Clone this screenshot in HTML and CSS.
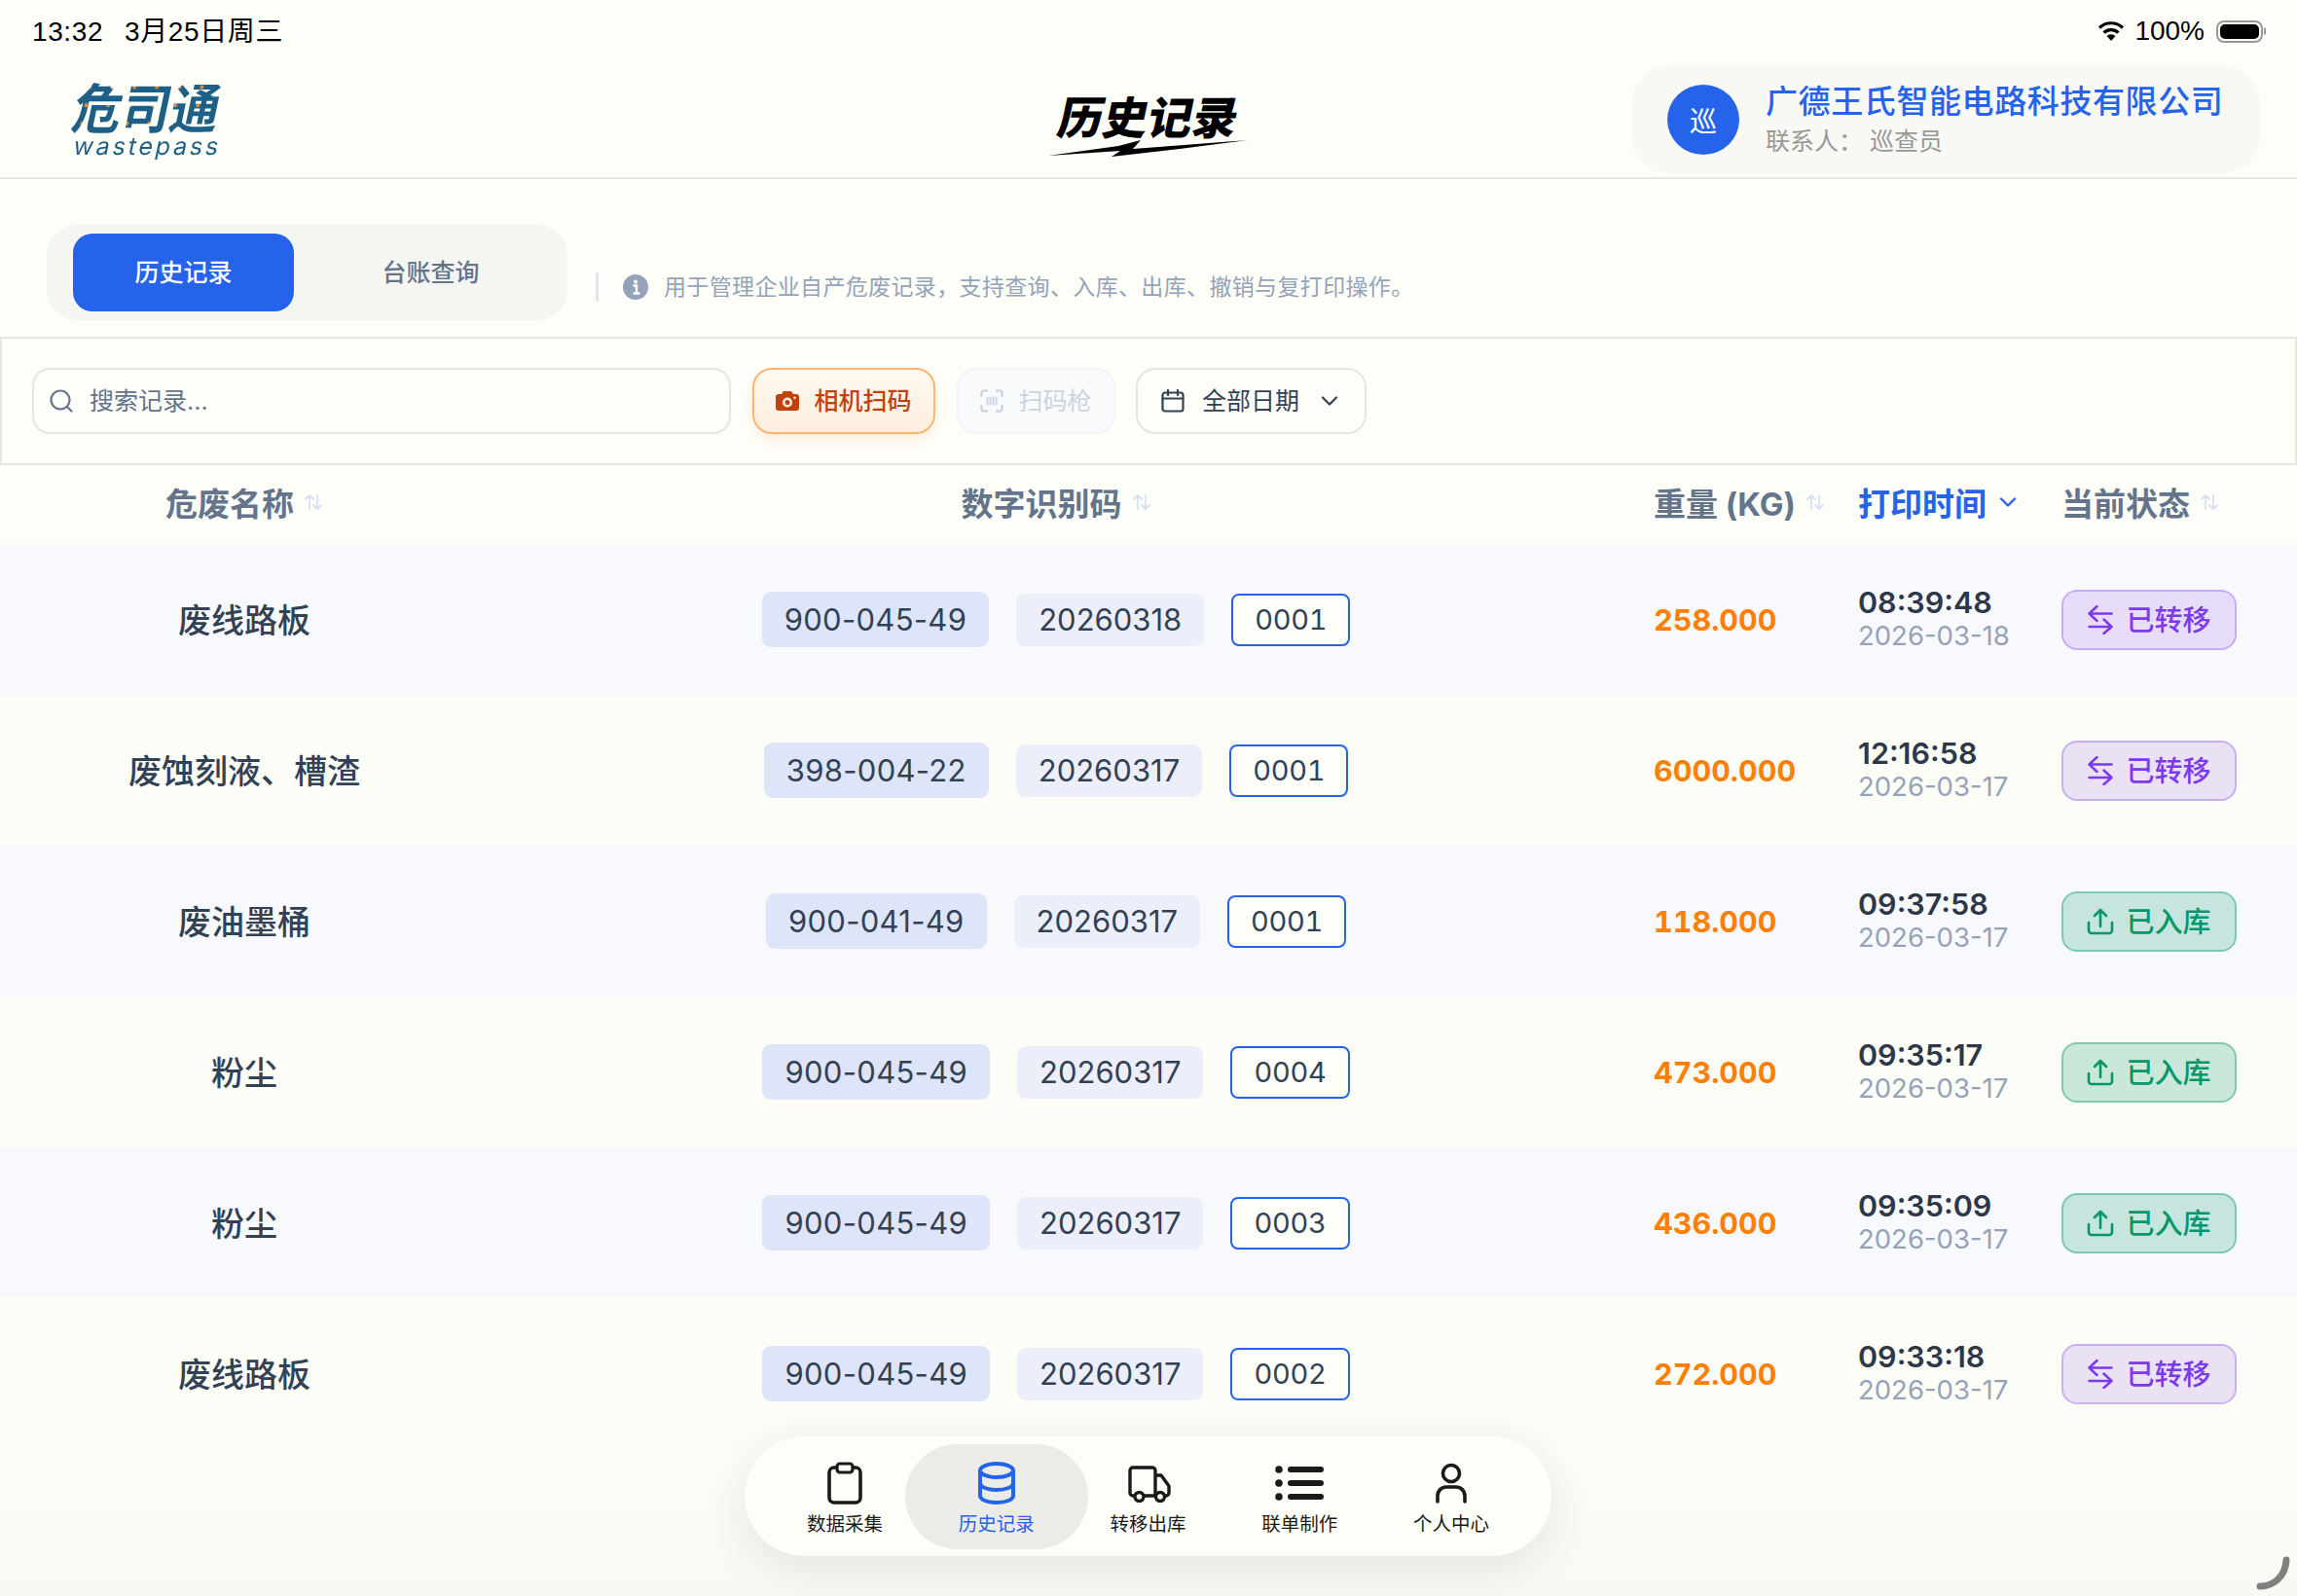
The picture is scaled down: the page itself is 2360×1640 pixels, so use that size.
FILE: index.html
```html
<!DOCTYPE html>
<html lang="zh-CN">
<head>
    <meta charset="UTF-8">
    <meta name="viewport" content="width=device-width, initial-scale=1.0">
    <title>历史记录</title>
    <link rel="stylesheet" href="styles.css">
</head>
<body>
    <svg class="icon-defs" width="0" height="0">
        <defs>
            <symbol id="i-sort" viewBox="0 0 20 20">
                <path d="M6 17V3M2 7l4-4 4 4M14 3v14M10 13l4 4 4-4" fill="none" stroke="currentColor" stroke-width="1.8" stroke-linecap="round" stroke-linejoin="round"/>
            </symbol>
            <symbol id="i-transfer" viewBox="0 0 26 30">
                <path d="M24.500 8.500H1.500M9.500 1 1.500 8.500 9.500 16M1.500 22h23M16.500 14.500l8 7.500-8 7" fill="none" stroke="currentColor" stroke-width="2.500" stroke-linecap="round" stroke-linejoin="round"/>
            </symbol>
            <symbol id="i-upload" viewBox="0 0 28 28">
                <path d="M14 19V2M8 8l6-6 6 6M2 15v8a3 3 0 0 0 3 3h18a3 3 0 0 0 3-3v-8" fill="none" stroke="currentColor" stroke-width="2.600" stroke-linecap="round" stroke-linejoin="round"/>
            </symbol>
        </defs>
    </svg>

    <div class="status-bar">
        <div class="status-left">
            <span>13:32</span>
            <span>3月25日周三</span>
        </div>
        <div class="status-right">
            <svg class="wifi-icon" viewBox="0 0 30 22">
                <path d="M15 21 10.500 16a6.500 6.500 0 0 1 9 0z" fill="#000"/>
                <path d="M7.500 12.500a11 11 0 0 1 15 0M3 7.500a17.500 17.500 0 0 1 24 0" fill="none" stroke="#000" stroke-width="3.200"/>
            </svg>
            <span>100%</span>
            <div class="battery"><div class="battery-level"></div></div>
            <div class="battery-nub"></div>
        </div>
    </div>

    <header class="app-header">
        <div class="logo">
            <div class="logo-cn">危司通</div>
            <div class="logo-en">wastepass</div>
        </div>
        <div class="page-title">
            <div class="page-title-text">历史记录</div>
            <svg class="page-title-bolt" viewBox="0 0 206 18">
                <path d="M0 16 72 6 95 0 87 9 205 0 135 9 65 17 74 11z" fill="#000"/>
            </svg>
        </div>
        <div class="company-card">
            <div class="company-avatar">巡</div>
            <div class="company-info">
                <div class="company-name">广德王氏智能电路科技有限公司</div>
                <div class="company-contact">联系人： 巡查员</div>
            </div>
        </div>
    </header>

    <section class="tab-area">
        <div class="tabs">
            <div class="tab active">历史记录</div>
            <div class="tab">台账查询</div>
        </div>
        <div class="hint">
            <div class="hint-line"></div>
            <svg class="hint-icon" viewBox="0 0 26 26">
                <circle cx="13" cy="13" r="13" fill="#94a3b8"/>
                <circle cx="13" cy="7.500" r="2" fill="#fff"/>
                <path d="M10.500 11.500H14v8M10.500 19.500h7" fill="none" stroke="#fff" stroke-width="2.400"/>
            </svg>
            <span class="hint-text">用于管理企业自产危废记录，支持查询、入库、出库、撤销与复打印操作。</span>
        </div>
    </section>

    <section class="filter-bar">
        <div class="search-box">
            <svg class="btn-icon" viewBox="0 0 24 24">
                <circle cx="11" cy="11" r="9.500" fill="none" stroke="#64748b" stroke-width="2.200"/>
                <path d="M18 18l4.500 4.500" stroke="#64748b" stroke-width="2.200" stroke-linecap="round"/>
            </svg>
            <span>搜索记录...</span>
        </div>
        <div class="filter-btn btn-camera">
            <svg class="btn-icon" viewBox="0 0 24 24">
                <path fill-rule="evenodd" d="M8 2h8l2 3h3a3 3 0 0 1 3 3v11a3 3 0 0 1-3 3H3a3 3 0 0 1-3-3V8a3 3 0 0 1 3-3h3zM12 8.500a5 5 0 1 0 0 10 5 5 0 0 0 0-10zM12 11a2.500 2.500 0 1 1 0 5 2.500 2.500 0 0 1 0-5zM19.500 7.500a1.300 1.300 0 1 0 0 2.600 1.300 1.300 0 0 0 0-2.600z" fill="#c2410c"/>
            </svg>
            <span>相机扫码</span>
        </div>
        <div class="filter-btn btn-scanner">
            <svg class="btn-icon" viewBox="0 0 24 24">
                <path d="M1.500 7V4a2.500 2.500 0 0 1 2.500-2.500h3M17 1.500h3A2.500 2.500 0 0 1 22.500 4v3M22.500 17v3a2.500 2.500 0 0 1-2.500 2.500h-3M7 22.500H4A2.500 2.500 0 0 1 1.500 20v-3" fill="none" stroke="#cbd5e1" stroke-width="2.400" stroke-linecap="round"/>
                <path d="M7.500 7.500v9M10.500 7.500v9M13.500 7.500v9M16.500 7.500v9" stroke="#cbd5e1" stroke-width="1.800"/>
            </svg>
            <span>扫码枪</span>
        </div>
        <div class="filter-btn btn-date">
            <svg class="btn-icon" viewBox="0 0 24 24">
                <rect x="1.500" y="3.500" width="21" height="19" rx="2.500" fill="none" stroke="#334155" stroke-width="2.200"/>
                <path d="M1.500 9.500h21M7 1v5M17 1v5" fill="none" stroke="#334155" stroke-width="2.200" stroke-linecap="round"/>
            </svg>
            <span>全部日期</span>
            <svg class="btn-chevron" viewBox="0 0 18 10">
                <path d="M2 1.500l7 7 7-7" fill="none" stroke="#334155" stroke-width="2.200" stroke-linecap="round" stroke-linejoin="round"/>
            </svg>
        </div>
    </section>

    <div class="table-head">
        <div class="th th-center">危废名称<svg class="sort-icon"><use href="#i-sort"/></svg></div>
        <div class="th th-center">数字识别码<svg class="sort-icon"><use href="#i-sort"/></svg></div>
        <div class="th th-weight">重量 (KG)<svg class="sort-icon"><use href="#i-sort"/></svg></div>
        <div class="th th-active">打印时间
            <svg class="sort-chevron" viewBox="0 0 18 10"><path d="M2 1.500l7 7 7-7" fill="none" stroke="#2563eb" stroke-width="2.400" stroke-linecap="round" stroke-linejoin="round"/></svg>
        </div>
        <div class="th">当前状态<svg class="sort-icon"><use href="#i-sort"/></svg></div>
    </div>

    <div class="table-row">
        <div class="cell-name">废线路板</div>
        <div class="cell-code">
            <span class="chip chip-code">900-045-49</span>
            <span class="chip chip-date">20260318</span>
            <span class="chip chip-seq">0001</span>
        </div>
        <div class="cell-weight">258.000</div>
        <div class="cell-time">
            <div class="time-main">08:39:48</div>
            <div class="time-date">2026-03-18</div>
        </div>
        <div class="badge badge-moved"><svg class="badge-icon"><use href="#i-transfer"/></svg><span>已转移</span></div>
    </div>

    <div class="table-row">
        <div class="cell-name">废蚀刻液、槽渣</div>
        <div class="cell-code">
            <span class="chip chip-code">398-004-22</span>
            <span class="chip chip-date">20260317</span>
            <span class="chip chip-seq">0001</span>
        </div>
        <div class="cell-weight">6000.000</div>
        <div class="cell-time">
            <div class="time-main">12:16:58</div>
            <div class="time-date">2026-03-17</div>
        </div>
        <div class="badge badge-moved"><svg class="badge-icon"><use href="#i-transfer"/></svg><span>已转移</span></div>
    </div>

    <div class="table-row">
        <div class="cell-name">废油墨桶</div>
        <div class="cell-code">
            <span class="chip chip-code">900-041-49</span>
            <span class="chip chip-date">20260317</span>
            <span class="chip chip-seq">0001</span>
        </div>
        <div class="cell-weight">118.000</div>
        <div class="cell-time">
            <div class="time-main">09:37:58</div>
            <div class="time-date">2026-03-17</div>
        </div>
        <div class="badge badge-stored"><svg class="badge-icon"><use href="#i-upload"/></svg><span>已入库</span></div>
    </div>

    <div class="table-row">
        <div class="cell-name">粉尘</div>
        <div class="cell-code">
            <span class="chip chip-code">900-045-49</span>
            <span class="chip chip-date">20260317</span>
            <span class="chip chip-seq">0004</span>
        </div>
        <div class="cell-weight">473.000</div>
        <div class="cell-time">
            <div class="time-main">09:35:17</div>
            <div class="time-date">2026-03-17</div>
        </div>
        <div class="badge badge-stored"><svg class="badge-icon"><use href="#i-upload"/></svg><span>已入库</span></div>
    </div>

    <div class="table-row">
        <div class="cell-name">粉尘</div>
        <div class="cell-code">
            <span class="chip chip-code">900-045-49</span>
            <span class="chip chip-date">20260317</span>
            <span class="chip chip-seq">0003</span>
        </div>
        <div class="cell-weight">436.000</div>
        <div class="cell-time">
            <div class="time-main">09:35:09</div>
            <div class="time-date">2026-03-17</div>
        </div>
        <div class="badge badge-stored"><svg class="badge-icon"><use href="#i-upload"/></svg><span>已入库</span></div>
    </div>

    <div class="table-row">
        <div class="cell-name">废线路板</div>
        <div class="cell-code">
            <span class="chip chip-code">900-045-49</span>
            <span class="chip chip-date">20260317</span>
            <span class="chip chip-seq">0002</span>
        </div>
        <div class="cell-weight">272.000</div>
        <div class="cell-time">
            <div class="time-main">09:33:18</div>
            <div class="time-date">2026-03-17</div>
        </div>
        <div class="badge badge-moved"><svg class="badge-icon"><use href="#i-transfer"/></svg><span>已转移</span></div>
    </div>

    <div class="bottom-fade"></div>

    <nav class="dock">
        <div class="dock-item">
            <svg class="dock-icon" viewBox="0 0 50 44">
                <rect x="9" y="6" width="32" height="36" rx="5" fill="none" stroke="#1a1a1a" stroke-width="3.600"/>
                <rect x="17" y="2" width="16" height="9" rx="3" fill="#fefef9" stroke="#1a1a1a" stroke-width="3.200"/>
            </svg>
            <span>数据采集</span>
        </div>
        <div class="dock-item active">
            <svg class="dock-icon" viewBox="0 0 50 44">
                <ellipse cx="25" cy="9" rx="17" ry="7" fill="none" stroke="#2563eb" stroke-width="4"/>
                <path d="M8 9v26c0 4 7.600 7 17 7s17-3 17-7V9M8 22c0 4 7.600 7 17 7s17-3 17-7" fill="none" stroke="#2563eb" stroke-width="4"/>
            </svg>
            <span>历史记录</span>
        </div>
        <div class="dock-item">
            <svg class="dock-icon" viewBox="0 0 50 44">
                <path d="M12 35H10a3 3 0 0 1-3-3V9a3 3 0 0 1 3-3h20a3 3 0 0 1 3 3v26H21M33 14h6l8 11v7a3 3 0 0 1-3 3h-1M33 35h1" fill="none" stroke="#1a1a1a" stroke-width="3.400" stroke-linejoin="round"/>
                <circle cx="16.500" cy="36" r="4.500" fill="none" stroke="#1a1a1a" stroke-width="3.400"/>
                <circle cx="38" cy="36" r="4.500" fill="none" stroke="#1a1a1a" stroke-width="3.400"/>
            </svg>
            <span>转移出库</span>
        </div>
        <div class="dock-item">
            <svg class="dock-icon" viewBox="0 0 50 44">
                <circle cx="4" cy="8" r="3.800" fill="#1a1a1a"/>
                <circle cx="4" cy="22" r="3.800" fill="#1a1a1a"/>
                <circle cx="4" cy="36" r="3.800" fill="#1a1a1a"/>
                <rect x="13" y="5" width="37" height="6" rx="3" fill="#1a1a1a"/>
                <rect x="13" y="19" width="37" height="6" rx="3" fill="#1a1a1a"/>
                <rect x="13" y="33" width="37" height="6" rx="3" fill="#1a1a1a"/>
            </svg>
            <span>联单制作</span>
        </div>
        <div class="dock-item">
            <svg class="dock-icon" viewBox="0 0 50 44">
                <circle cx="25" cy="12" r="8.500" fill="none" stroke="#1a1a1a" stroke-width="3.600"/>
                <path d="M11 41v-6a9 9 0 0 1 9-9h10a9 9 0 0 1 9 9v6" fill="none" stroke="#1a1a1a" stroke-width="3.600" stroke-linecap="round"/>
            </svg>
            <span>个人中心</span>
        </div>
    </nav>

    <svg class="resize-handle" viewBox="0 0 36 36">
        <path d="M4 32c13 0 26-9 27-27" fill="none" stroke="#808080" stroke-width="7" stroke-linecap="round"/>
    </svg>
</body>
</html>
```

FILE: styles.css
```css
* {
    box-sizing: border-box;
}

body {
    margin: 0;
    width: 2360px;
    height: 1640px;
    overflow: hidden;
    position: relative;
    background-color: #fefef9;
    color: #334155;
    font-family: Inter, "Noto Sans CJK SC", sans-serif;
}

.icon-defs {
    position: absolute;
}

/* status bar */
.status-bar {
    height: 64px;
    padding: 0 32px 0 33px;
    display: flex;
    justify-content: space-between;
    align-items: center;
    color: #000;
    font-family: "Liberation Sans", "Noto Sans CJK SC", sans-serif;
    font-size: 28px;
    line-height: 34px;
}

.status-left {
    display: flex;
    align-items: baseline;
    gap: 22px;
    padding-top: 2px;
    letter-spacing: 0.600px;
}

.status-right {
    display: flex;
    align-items: center;
}

.wifi-icon {
    width: 30px;
    height: 22px;
    margin-right: 9px;
}

.battery {
    width: 48px;
    height: 23px;
    margin-left: 12px;
    padding: 2px;
    border: 2px solid #999;
    border-radius: 8px;
}

.battery-level {
    height: 100%;
    background-color: #000;
    border-radius: 5px;
}

.battery-nub {
    width: 2px;
    height: 8px;
    margin-left: 1px;
    background-color: #999;
    border-radius: 0 2px 2px 0;
}

/* header */
.app-header {
    height: 120px;
    padding: 0 38px;
    display: grid;
    grid-template-columns: 1fr auto 1fr;
    align-items: center;
    border-bottom: 2px solid #e5e6dc;
}

.logo {
    width: 156px;
    margin-left: 38px;
}

.logo-cn,
.logo-en {
    background-color: #1d5f86;
    background-image: radial-gradient(circle, #f08a24 1.600px, transparent 2.200px);
    background-size: 23px 17px;
    -webkit-background-clip: text;
    background-clip: text;
    color: transparent;
}

.logo-cn {
    font-size: 50px;
    font-weight: 700;
    line-height: 58px;
    transform: skewX(-12deg) scaleY(1.1);
}

.logo-en {
    font-size: 25px;
    line-height: 30px;
    margin: -6px 0 -2px;
    letter-spacing: 2.800px;
    transform: skewX(-12deg);
}

.page-title {
    display: flex;
    flex-direction: column;
    align-items: center;
    padding-top: 14px;
}

.page-title-text {
    font-size: 46px;
    font-weight: 900;
    line-height: 46px;
    color: #000;
    transform: skewX(-12deg);
}

.page-title-bolt {
    width: 206px;
    height: 18px;
}

.company-card {
    justify-self: end;
    width: 646px;
    height: 112px;
    padding: 0 37px;
    display: flex;
    align-items: center;
    gap: 27px;
    background-color: #f8f8f5;
    border-radius: 40px;
}

.company-avatar {
    width: 74px;
    height: 72px;
    border-radius: 50%;
    background-color: #2563eb;
    color: #fff;
    font-size: 28px;
    display: flex;
    justify-content: center;
    align-items: center;
}

.company-name {
    font-size: 33px;
    font-weight: 500;
    line-height: 44px;
    letter-spacing: 0.600px;
    color: #2563eb;
}

.company-contact {
    font-size: 25px;
    line-height: 38px;
    color: #999;
}

/* tabs */
.tab-area {
    height: 162px;
    padding: 47px 0 0 48px;
    display: flex;
    align-items: flex-start;
}

.tabs {
    width: 535px;
    height: 98px;
    padding: 9px 27px;
    display: flex;
    gap: 27px;
    background-color: #f5f5f2;
    border-radius: 30px;
}

.tab {
    width: 227px;
    height: 80px;
    padding-bottom: 5px;
    border-radius: 20px;
    font-size: 25px;
    font-weight: 500;
    color: #64748b;
    display: flex;
    justify-content: center;
    align-items: center;
}

.tab.active {
    background-color: #2563eb;
    color: #fff;
}

.hint {
    margin: 49px 0 0 29px;
    height: 30px;
    display: flex;
    align-items: center;
    font-size: 23px;
    color: #94a3b8;
}

.hint-text {
    padding-bottom: 5px;
    letter-spacing: 0.350px;
}

.hint-line {
    width: 3px;
    height: 30px;
    margin-right: 25px;
    background-color: #dfe6f2;
}

.hint-icon {
    width: 26px;
    height: 26px;
    margin-right: 16px;
}

/* filter bar */
.filter-bar {
    height: 132px;
    padding: 30px 31px;
    display: flex;
    align-items: center;
    gap: 22px;
    border: 2px solid #e5e6dc;
}

.search-box {
    width: 718px;
    height: 68px;
    padding: 0 16px;
    display: flex;
    align-items: center;
    gap: 17px;
    border: 2px solid #e5e6dc;
    border-radius: 18px;
    font-size: 25px;
    color: #64748b;
}

.search-box span,
.filter-btn span {
    padding-bottom: 4px;
}

.btn-icon {
    width: 24px;
    height: 24px;
    flex-shrink: 0;
}

.filter-btn {
    height: 68px;
    display: flex;
    align-items: center;
    justify-content: center;
    gap: 15px;
    border: 2px solid #e5e6dc;
    border-radius: 20px;
    font-size: 25px;
}

.btn-camera {
    width: 188px;
    border-color: #fdb672;
    background: linear-gradient(to bottom, #fffaf1, #ffeedd);
    box-shadow: 0 6px 14px rgba(249, 115, 22, 0.12);
    color: #c2410c;
    font-weight: 500;
}

.btn-scanner {
    width: 163px;
    border-color: #f1f5f9;
    background-color: #f8fafc;
    color: #cbd5e1;
}

.btn-date {
    width: 237px;
    margin-left: -1px;
    padding: 0 24px;
    justify-content: flex-start;
    gap: 18px;
    color: #334155;
    white-space: nowrap;
}

.btn-chevron {
    width: 18px;
    height: 10px;
    margin-left: 4px;
}

/* table */
.table-head,
.table-row {
    display: grid;
    grid-template-columns: 502px 1166px 241px 209px 1fr;
    align-items: center;
}

.table-head {
    height: 81px;
    padding-bottom: 5px;
}

.th {
    display: flex;
    align-items: center;
    font-size: 33px;
    font-weight: 700;
    color: #64748b;
}

.th-center {
    justify-content: center;
}

.th-weight {
    padding-left: 31px;
}

.th-active {
    color: #2563eb;
}

.sort-icon {
    width: 20px;
    height: 20px;
    margin-left: 10px;
    color: #d6e0f5;
}

.sort-chevron {
    width: 18px;
    height: 10px;
    margin-left: 13px;
}

.table-row {
    height: 155px;
    background-color: #fcfdf7;
}

.table-row:nth-of-type(odd) {
    background-color: #f8f9fd;
}

.cell-name {
    padding-bottom: 3px;
    text-align: center;
    font-size: 34px;
    font-weight: 500;
    color: #334155;
}

.cell-code {
    display: flex;
    justify-content: center;
    align-items: center;
    gap: 28px;
}

.chip {
    display: flex;
    align-items: center;
    height: 54px;
    padding: 0 23px;
    border-radius: 9px;
    font-size: 31px;
    color: #334155;
}

.chip-code {
    height: 57px;
    background-color: #dee5f8;
    letter-spacing: 0.300px;
}

.chip-date {
    background-color: #eceffa;
}

.chip-seq {
    padding: 0 22px;
    border: 2px solid #2563eb;
    background-color: #fefef9;
    border-radius: 8px;
    font-size: 29px;
    font-variant-numeric: tabular-nums;
    letter-spacing: -0.300px;
}

.cell-weight {
    padding-left: 31px;
    font-size: 30.500px;
    font-weight: 700;
    font-variant-numeric: tabular-nums;
    color: #ff8000;
}

.cell-time {
    padding-bottom: 3px;
}

.time-main {
    font-size: 30.500px;
    font-weight: 600;
    line-height: 36px;
    color: #2d3748;
}

.time-date {
    font-size: 27.500px;
    line-height: 33px;
    color: #94a3b8;
}

.badge {
    width: 180px;
    height: 62px;
    display: flex;
    justify-content: center;
    align-items: center;
    gap: 12px;
    border-radius: 16px;
    font-size: 29px;
    font-weight: 500;
}

.badge span {
    padding-bottom: 3px;
}

.badge-icon {
    width: 28px;
    height: 30px;
}

.badge-moved {
    background-color: rgba(124, 58, 237, 0.14);
    border: 2px solid rgba(124, 58, 237, 0.3);
    color: #7c3aed;
}

.badge-stored {
    background-color: rgba(5, 150, 105, 0.2);
    border: 2px solid rgba(5, 150, 105, 0.38);
    color: #059669;
}

/* bottom */
.bottom-fade {
    position: absolute;
    left: 0;
    right: 0;
    bottom: 0;
    height: 210px;
    background: linear-gradient(to bottom, rgba(248, 249, 243, 0), #f8f9f3);
    pointer-events: none;
}

.dock {
    position: absolute;
    left: 765px;
    top: 1476px;
    width: 829px;
    height: 123px;
    padding: 0 25px;
    display: flex;
    background-color: #fefef9;
    border-radius: 62px;
    box-shadow: 0 12px 50px rgba(0, 0, 0, 0.09);
    isolation: isolate;
}

.dock-item {
    position: relative;
    width: 156px;
    padding-top: 26px;
    display: flex;
    flex-direction: column;
    align-items: center;
    gap: 8px;
    font-size: 19.500px;
    line-height: 24px;
    color: #1a1a1a;
}

.dock-item.active {
    color: #2563eb;
}

.dock-item.active::before {
    content: "";
    position: absolute;
    inset: 8px -16px 7px;
    z-index: -1;
    background-color: #ebebe7;
    border-radius: 54px;
}

.dock-icon {
    width: 50px;
    height: 44px;
}

.resize-handle {
    position: absolute;
    left: 2318px;
    top: 1598px;
    width: 36px;
    height: 36px;
}
```
